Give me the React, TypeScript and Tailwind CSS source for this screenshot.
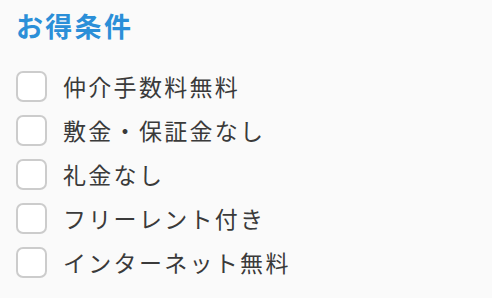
const items = ["仲介手数料無料", "敷金・保証金なし", "礼金なし", "フリーレント付き", "インターネット無料"]

export default function App() {
  return (
    <div
      className="min-h-screen bg-[#fafafa] px-4 pt-[9px]"
      style={{ fontFamily: '"Noto Sans CJK JP", "Noto Sans", sans-serif' }}
    >
      <h2 className="text-[27px] leading-[34px] font-bold tracking-[2.3px] text-[#2b8fd8]">お得条件</h2>
      <ul className="mt-[28px] flex flex-col gap-[13px]">
        {items.map((label) => (
          <li key={label}>
            <label className="flex items-center gap-4 cursor-pointer">
              <span className="h-[31px] w-[31px] shrink-0 rounded-[7px] border-2 border-[#cccccc] bg-white" />
              <span className="text-[23px] leading-[31px] tracking-[2.3px] text-[#3a3a3a]">{label}</span>
            </label>
          </li>
        ))}
      </ul>
    </div>
  )
}
